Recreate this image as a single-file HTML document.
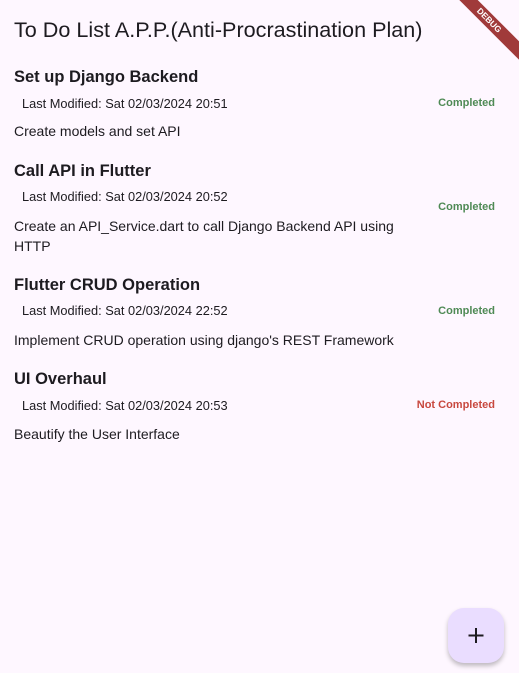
<!DOCTYPE html>
<html><head><style>
body{margin:0;width:519px;height:673px;background:#fef7ff;font-family:"Liberation Sans","DejaVu Sans",sans-serif;color:#1d1b20;position:relative;overflow:hidden}
.a{position:absolute;white-space:nowrap;line-height:1}
.t{font-size:16.5px;font-weight:bold;left:14px}
.m{font-size:12.8px;left:22px;transform:scaleX(1.0)}
.s{font-size:11px;font-weight:bold;right:24px}
.g{color:#4f8a55}.r{color:#c8483f}
.d{font-size:14px;left:14px;line-height:20px;white-space:normal;width:400px}
</style></head><body>
<div class="a" style="left:14px;top:19px;font-size:21.6px">To Do List A.P.P.(Anti-Procrastination Plan)</div>
<div style="position:absolute;right:-32px;top:14px;width:124px;height:13px;background:#a03a3a;transform:rotate(45deg);color:#fff;font-size:8.5px;font-weight:bold;text-align:center;line-height:13px">DEBUG</div>

<div class="a t" style="top:69px">Set up Django Backend</div>
<div class="a m" style="top:98px">Last Modified: Sat 02/03/2024 20:51</div>
<div class="a s g" style="top:98px">Completed</div>
<div class="a d" style="top:121px">Create models and set API</div>

<div class="a t" style="top:163px">Call API in Flutter</div>
<div class="a m" style="top:191px">Last Modified: Sat 02/03/2024 20:52</div>
<div class="a s g" style="top:202px">Completed</div>
<div class="a d" style="top:216px">Create an API_Service.dart to call Django Backend API using HTTP</div>

<div class="a t" style="top:277px">Flutter CRUD Operation</div>
<div class="a m" style="top:305px">Last Modified: Sat 02/03/2024 22:52</div>
<div class="a s g" style="top:306px">Completed</div>
<div class="a d" style="top:330px">Implement CRUD operation using django's REST Framework</div>

<div class="a t" style="top:371px">UI Overhaul</div>
<div class="a m" style="top:400px">Last Modified: Sat 02/03/2024 20:53</div>
<div class="a s r" style="top:400px">Not Completed</div>
<div class="a d" style="top:424px">Beautify the User Interface</div>

<div style="position:absolute;left:448px;top:608px;width:56px;height:55px;border-radius:16px;background:#eaddff;box-shadow:0 3px 5px rgba(0,0,0,.25)">
<svg width="56" height="55" viewBox="0 0 56 55"><path d="M28 20v15M20.5 27.5h15" stroke="#1d1b20" stroke-width="2"/></svg>
</div>
</body></html>
